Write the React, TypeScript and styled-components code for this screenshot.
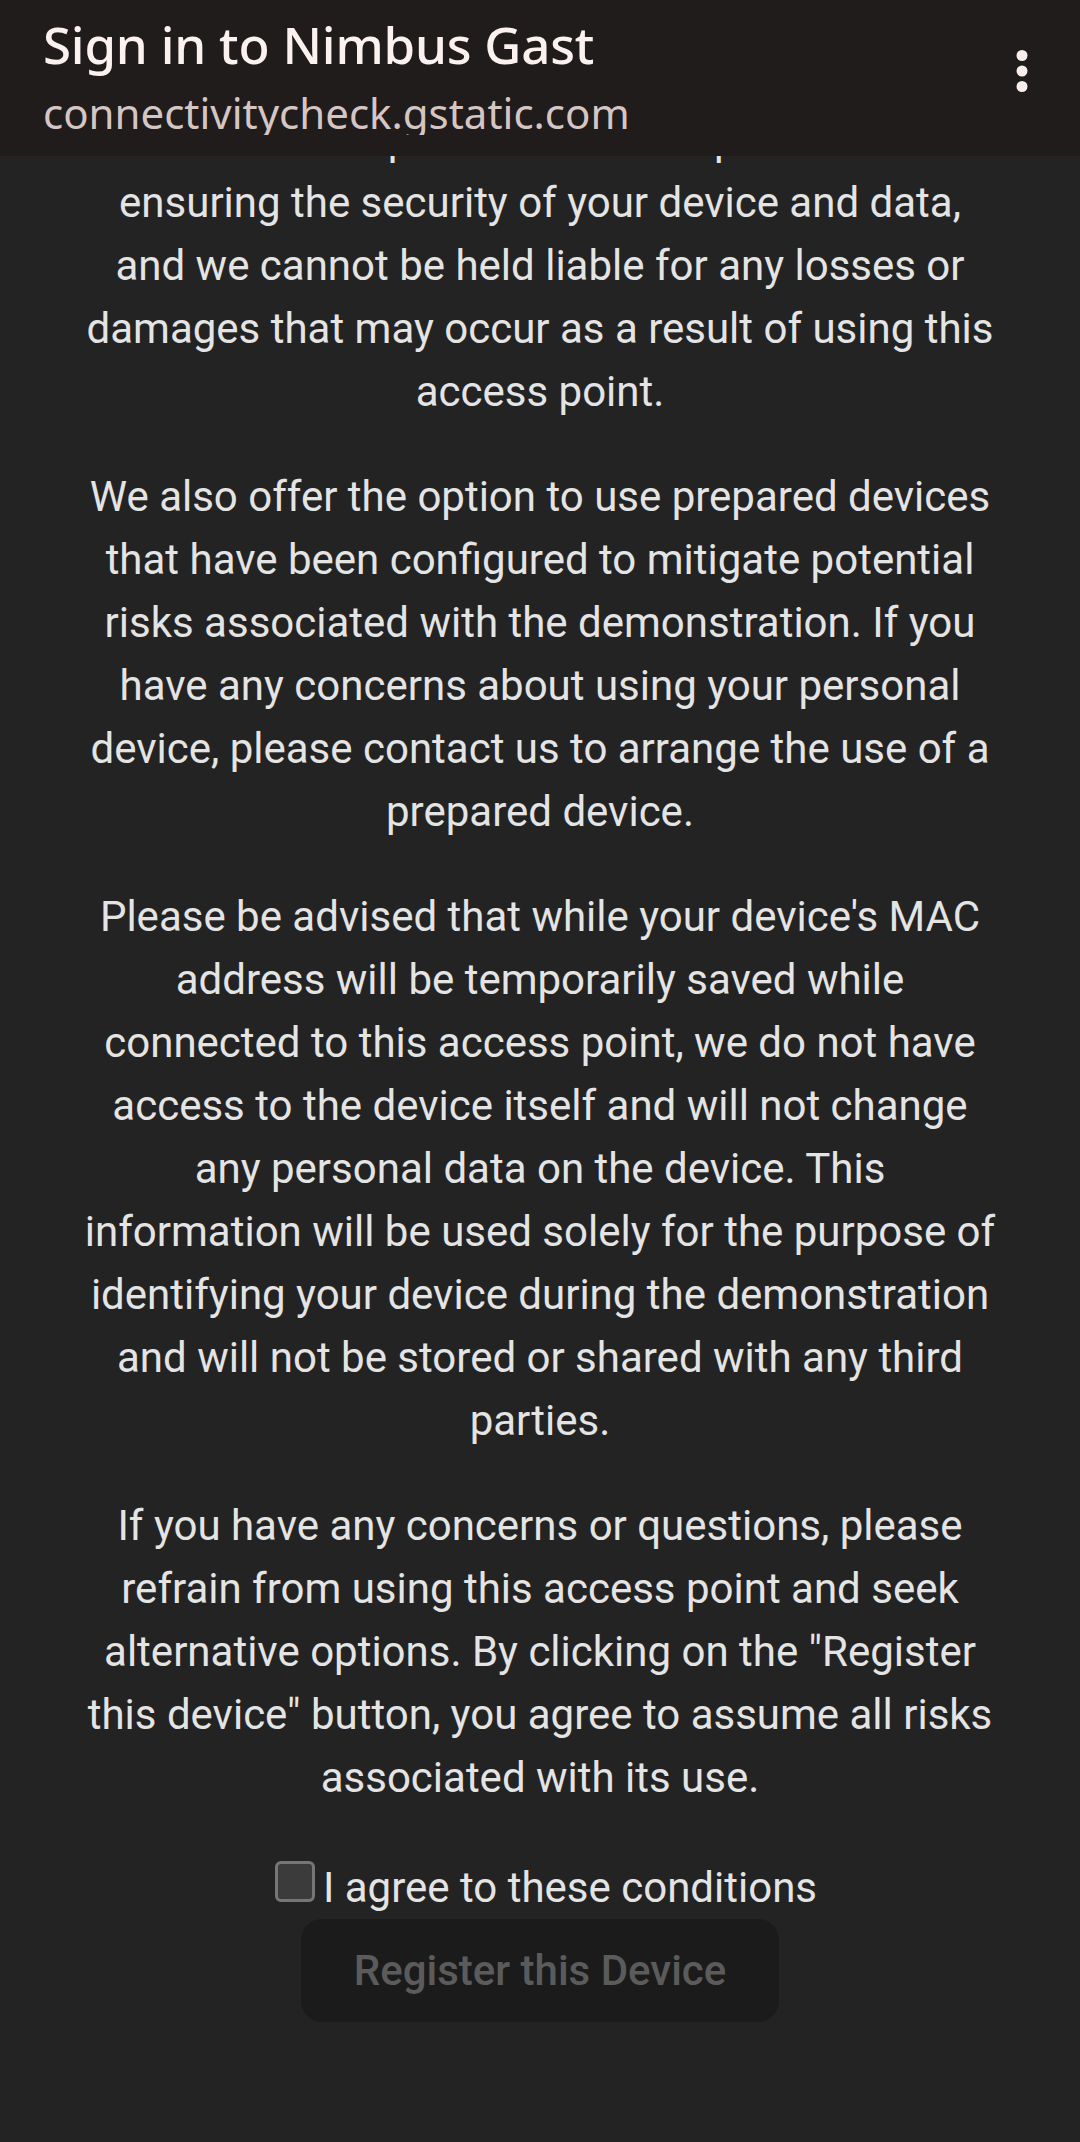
import React, { useLayoutEffect, useRef } from "react";
import styled, { createGlobalStyle } from "styled-components";

const GlobalStyle = createGlobalStyle`
  html, body {
    margin: 0;
    padding: 0;
    background: #232323;
  }
  body {
    font-family: Roboto, "Liberation Sans", sans-serif;
  }
  * {
    box-sizing: border-box;
  }
`;

const Screen = styled.div`
  height: 2142px;
  display: flex;
  flex-direction: column;
  background: #232323;
  overflow: hidden;
`;

const TopBar = styled.header`
  flex: 0 0 156px;
  display: flex;
  align-items: flex-start;
  background: #201c1c;
  padding-left: 43px;
`;

const TitleBlock = styled.div`
  flex: 1;
  height: 135px;
  overflow: hidden;
  display: flex;
  flex-direction: column;
  padding-top: 11px;
`;

const Title = styled.h1`
  margin: 0;
  font-family: "Noto Sans", Lato, sans-serif;
  font-weight: 500;
  font-size: 51px;
  line-height: 66px;
  letter-spacing: -0.2px;
  color: #fbf1ef;
  white-space: nowrap;
`;

const Subtitle = styled.div`
  margin-top: 10px;
  font-family: "Noto Sans", Lato, sans-serif;
  font-weight: 400;
  font-size: 42px;
  line-height: 52px;
  letter-spacing: 0;
  color: #d6c6c3;
  white-space: nowrap;
`;

const MenuButton = styled.button`
  flex: 0 0 72px;
  height: 142px;
  margin-right: 22px;
  padding: 0;
  border: 0;
  background: none;
  display: flex;
  align-items: center;
  justify-content: center;
`;

const Scroller = styled.main`
  flex: 1;
  overflow: hidden;
`;

const Article = styled.div`
  padding: 0 84px 240px;
  text-align: center;
  color: #e4e4e4;
  font-family: Roboto, "Liberation Sans", sans-serif;
  font-size: 42px;
  line-height: 63px;
`;

const Para = styled.p`
  margin: 0 0 42px;
`;

const AgreeRow = styled.label`
  display: block;
  padding: 5px 0 0 12px;
  text-align: center;
`;

const Check = styled.input`
  appearance: none;
  -webkit-appearance: none;
  display: inline-block;
  width: 40px;
  height: 41px;
  margin: 0 8px 0 0;
  border: 3px solid #767676;
  border-radius: 6px;
  background: #3b3b3b;
  vertical-align: baseline;
`;

const ButtonRow = styled.div`
  text-align: center;
`;

const RegisterButton = styled.button`
  display: inline-block;
  padding: 20px 53px;
  border: 0;
  border-radius: 21px;
  background: #1b1b1b;
  color: #5b5b5b;
  font-family: Roboto, "Liberation Sans", sans-serif;
  font-weight: 500;
  font-size: 42px;
  line-height: 63px;
`;

function KebabIcon() {
  return (
    <svg width="12" height="43" viewBox="0 0 12 43" aria-hidden="true">
      <circle cx="6" cy="5.5" r="5.5" fill="#f9eeec" />
      <circle cx="6" cy="21" r="5.5" fill="#f9eeec" />
      <circle cx="6" cy="36.5" r="5.5" fill="#f9eeec" />
    </svg>
  );
}

export default function App() {
  const scrollerRef = useRef<HTMLElement>(null);
  const anchorRef = useRef<HTMLSpanElement>(null);

  useLayoutEffect(() => {
    const scroller = scrollerRef.current;
    const anchor = anchorRef.current;
    if (!scroller || !anchor) return;
    scroller.scrollTop = 0;
    const top = anchor.getBoundingClientRect().top;
    scroller.scrollTop = Math.round(top - 115);
  }, []);

  return (
    <>
      <GlobalStyle />
      <Screen>
        <TopBar>
          <TitleBlock>
            <Title>Sign in to Nimbus Gast</Title>
            <Subtitle>connectivitycheck.gstatic.com</Subtitle>
          </TitleBlock>
          <MenuButton aria-label="More options">
            <KebabIcon />
          </MenuButton>
        </TopBar>
        <Scroller ref={scrollerRef}>
          <Article>
            <Para>
              By connecting to this access point, you acknowledge that it is
              provided for demonstration purposes only and that
              <br />
              <span ref={anchorRef}>each user is responsible for their protection and</span>
              <br />
              ensuring the security of your device and data, and we cannot be
              held liable for any losses or damages that may occur as a result
              of using this access point.
            </Para>
            <Para>
              We also offer the option to use prepared devices that have been
              configured to mitigate potential risks associated with the
              demonstration. If you have any concerns about using your personal
              device, please contact us to arrange the use of a prepared device.
            </Para>
            <Para>
              Please be advised that while your device's MAC address will be
              temporarily saved while connected to this access point, we do not
              have access to the device itself and will not change any personal
              data on the device. This information will be used solely for the
              purpose of identifying your device during the demonstration and
              will not be stored or shared with any third parties.
            </Para>
            <Para>
              If you have any concerns or questions, please refrain from using
              this access point and seek alternative options. By clicking on the
              "Register this device" button, you agree to assume all risks
              associated with its use.
            </Para>
            <AgreeRow>
              <Check type="checkbox" />I agree to these conditions
            </AgreeRow>
            <ButtonRow>
              <RegisterButton type="button" disabled>
                Register this Device
              </RegisterButton>
            </ButtonRow>
          </Article>
        </Scroller>
      </Screen>
    </>
  );
}
